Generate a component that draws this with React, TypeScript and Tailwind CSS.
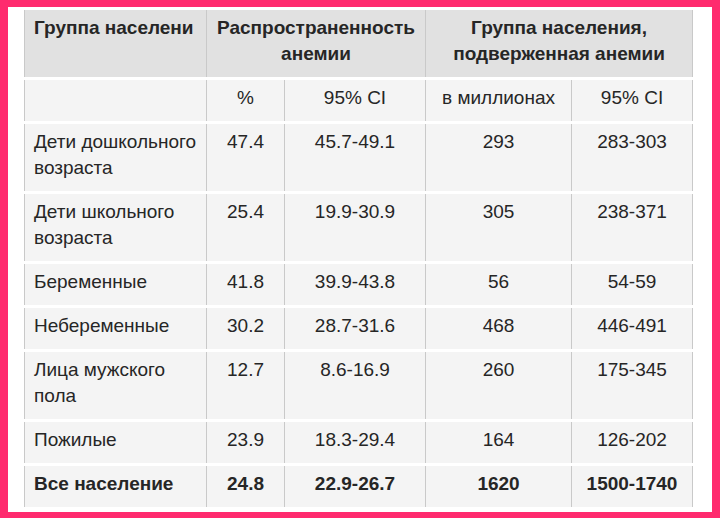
const rows = [
  { name: ['Дети дошкольного', 'возраста'], pct: '47.4', ci: '45.7-49.1', mln: '293', mci: '283-303' },
  { name: ['Дети школьного', 'возраста'], pct: '25.4', ci: '19.9-30.9', mln: '305', mci: '238-371' },
  { name: ['Беременные'], pct: '41.8', ci: '39.9-43.8', mln: '56', mci: '54-59' },
  { name: ['Небеременные'], pct: '30.2', ci: '28.7-31.6', mln: '468', mci: '446-491' },
  { name: ['Лица мужского', 'пола'], pct: '12.7', ci: '8.6-16.9', mln: '260', mci: '175-345' },
  { name: ['Пожилые'], pct: '23.9', ci: '18.3-29.4', mln: '164', mci: '126-202' },
];

const cell = 'border-l border-[#c9c9c9] pt-[5px] pb-[10px] align-top leading-[26px]';

export default function App() {
  return (
    <div className="w-[720px] h-[518px] bg-[#ff2a6e] pt-[7px] pl-[8px] pr-[8px] pb-[6px]">
      <div className="h-full bg-white pl-[16px] pr-[19px]">
        <table
          className="w-[669px] table-fixed border-separate border-spacing-x-0 border-spacing-y-[3px] text-[19px] text-[#262626]"
          style={{ fontFamily: '"Liberation Sans", Arial, sans-serif' }}
        >
          <colgroup>
            <col className="w-[182px]" />
            <col className="w-[78px]" />
            <col className="w-[141px]" />
            <col className="w-[146px]" />
            <col className="w-[122px]" />
          </colgroup>
          <thead>
            <tr className="bg-[#e1e1e1] font-bold">
              <th className={`${cell} text-left pl-[9px] whitespace-nowrap overflow-hidden`}>Группа населени</th>
              <th colSpan={2} className={`${cell} text-center`}>
                Распространенность
                <br />
                анемии
              </th>
              <th colSpan={2} className={`${cell} text-center border-r`}>
                Группа населения,
                <br />
                подверженная анемии
              </th>
            </tr>
          </thead>
          <tbody className="bg-[#f4f4f4]">
            <tr>
              <td className={cell}></td>
              <td className={`${cell} text-center`}>%</td>
              <td className={`${cell} text-center`}>95% CI</td>
              <td className={`${cell} text-center`}>в миллионах</td>
              <td className={`${cell} text-center border-r`}>95% CI</td>
            </tr>
            {rows.map(r => (
              <tr key={r.name.join(' ')}>
                <td className={`${cell} pl-[9px]`}>
                  {r.name.map((n, i) => (
                    <div key={i}>{n}</div>
                  ))}
                </td>
                <td className={`${cell} text-center`}>{r.pct}</td>
                <td className={`${cell} text-center`}>{r.ci}</td>
                <td className={`${cell} text-center`}>{r.mln}</td>
                <td className={`${cell} text-center border-r`}>{r.mci}</td>
              </tr>
            ))}
            <tr className="font-bold">
              <td className={`${cell} pl-[9px]`}>Все население</td>
              <td className={`${cell} text-center`}>24.8</td>
              <td className={`${cell} text-center`}>22.9-26.7</td>
              <td className={`${cell} text-center`}>1620</td>
              <td className={`${cell} text-center border-r`}>1500-1740</td>
            </tr>
          </tbody>
        </table>
      </div>
    </div>
  );
}
